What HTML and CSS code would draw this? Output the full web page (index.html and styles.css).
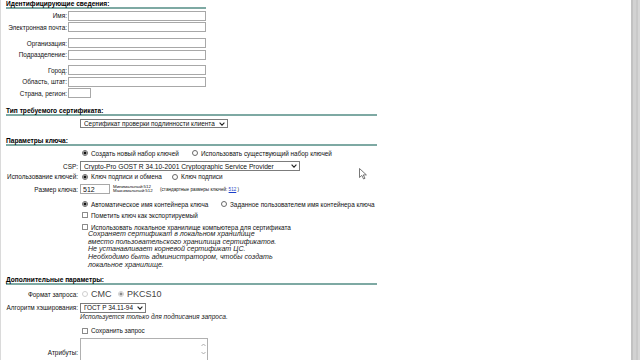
FILE: index.html
```html
<!DOCTYPE html>
<html lang="ru">
<head>
<meta charset="utf-8">
<title>Запрос сертификата</title>
<link rel="stylesheet" href="styles.css">
</head>
<body>
<div class="page">
  <section class="sec sec-id">
    <h2 class="title title-short">Идентифицирующие сведения:</h2>
    <div class="row first"><span class="lbl">Имя:</span><input class="text" type="text"></div>
    <div class="row"><span class="lbl">Электронная почта:</span><input class="text" type="text"></div>
    <div class="row sep"><span class="lbl">Организация:</span><input class="text" type="text"></div>
    <div class="row"><span class="lbl">Подразделение:</span><input class="text" type="text"></div>
    <div class="row sep2"><span class="lbl">Город:</span><input class="text" type="text"></div>
    <div class="row"><span class="lbl">Область, штат:</span><input class="text" type="text"></div>
    <div class="row"><span class="lbl">Страна, регион:</span><input class="text short" type="text"></div>
  </section>

  <section class="sec sec-type">
    <h2 class="title title-long">Тип требуемого сертификата:</h2>
    <div class="row r-cert"><span class="lbl"></span>
      <div class="select sel-cert"><span class="sel-text">Сертификат проверки подлинности клиента</span>
        <svg class="chev" width="6" height="4" viewBox="0 0 6 4"><path d="M0.6 0.6 L3 3.2 L5.4 0.6" fill="none" stroke="#222" stroke-width="1.1"/></svg>
      </div>
    </div>
  </section>

  <section class="sec sec-key">
    <h2 class="title title-long">Параметры ключа:</h2>
    <div class="row r-keyset"><span class="lbl"></span>
      <label class="opt w110"><input type="radio" name="ks" checked>Создать новый набор ключей</label>
      <label class="opt"><input type="radio" name="ks">Использовать существующий набор ключей</label>
    </div>
    <div class="row r-csp"><span class="lbl">CSP:</span>
      <div class="select sel-csp"><span class="sel-text latin">Crypto-Pro GOST R 34.10-2001 Cryptographic Service Provider</span>
        <svg class="chev" width="6" height="4" viewBox="0 0 6 4"><path d="M0.6 0.6 L3 3.2 L5.4 0.6" fill="none" stroke="#222" stroke-width="1.1"/></svg>
      </div>
    </div>
    <div class="row r-usage"><span class="lbl">Использование ключей:</span>
      <label class="opt w90"><input type="radio" name="ku" checked>Ключ подписи и обмена</label>
      <label class="opt"><input type="radio" name="ku">Ключ подписи</label>
    </div>
    <div class="row r-size"><span class="lbl">Размер ключа:</span>
      <input class="text size" type="text" value="512">
      <span class="minmax"><span>Минимальный:512</span><span>Максимальный:512</span></span>
      <span class="std">(стандартные размеры ключей: <a class="lnk">512</a> )</span>
    </div>
    <div class="row r-cont"><span class="lbl"></span>
      <label class="opt w139"><input type="radio" name="kc" checked>Автоматическое имя контейнера ключа</label>
      <label class="opt"><input type="radio" name="kc">Заданное пользователем имя контейнера ключа</label>
    </div>
    <div class="row r-exp"><span class="lbl"></span>
      <label class="opt"><input type="checkbox">Пометить ключ как экспортируемый</label>
    </div>
    <div class="row r-local"><span class="lbl"></span>
      <label class="opt"><input type="checkbox">Использовать локальное хранилище компьютера для сертификата</label>
    </div>
    <div class="note">
      <div>Сохраняет сертификат в локальном хранилище</div>
      <div>вместо пользовательского хранилища сертификатов.</div>
      <div>Не устанавливает корневой сертификат ЦС.</div>
      <div>Необходимо быть администратором, чтобы создать</div>
      <div>локальное хранилище.</div>
    </div>
  </section>

  <section class="sec sec-extra">
    <h2 class="title title-long">Дополнительные параметры:</h2>
    <div class="row r-format"><span class="lbl">Формат запроса:</span>
      <label class="opt big w36"><input type="radio" name="fmt" class="dis" disabled>CMC</label>
      <label class="opt big"><input type="radio" name="fmt" class="dis" checked>PKCS10</label>
    </div>
    <div class="row r-hash"><span class="lbl">Алгоритм хэширования:</span>
      <div class="select sel-hash"><span class="sel-text">ГОСТ Р 34.11-94</span>
        <svg class="chev" width="6" height="4" viewBox="0 0 6 4"><path d="M0.6 0.6 L3 3.2 L5.4 0.6" fill="none" stroke="#222" stroke-width="1.1"/></svg>
      </div>
    </div>
    <div class="hashnote">Используется только для подписания запроса.</div>
    <div class="row r-save"><span class="lbl"></span>
      <label class="opt"><input type="checkbox">Сохранить запрос</label>
    </div>
    <div class="row r-attr"><span class="lbl attr-lbl">Атрибуты:</span>
      <div class="textarea">
        <div class="ta-scroll">
          <svg width="5" height="4" viewBox="0 0 5 4"><path d="M0.5 3 L2.5 1 L4.5 3" fill="none" stroke="#999" stroke-width="0.8"/></svg>
          <svg width="5" height="4" viewBox="0 0 5 4"><path d="M0.5 1 L2.5 3 L4.5 1" fill="none" stroke="#999" stroke-width="0.8"/></svg>
        </div>
      </div>
    </div>
  </section>

  <svg class="cursor" width="9" height="12" viewBox="0 0 9 12"><path d="M0.5 0.5 L0.5 9.5 L2.8 7.4 L4.6 11 L6 10.3 L4.3 6.9 L7.4 6.9 Z" fill="#fff" stroke="#555" stroke-width="0.8"/></svg>
</div>
<div class="scrollbar"></div>
</body>
</html>
```

FILE: styles.css
```css
* { box-sizing: border-box; }
html, body { margin: 0; padding: 0; }
body {
  width: 640px;
  height: 360px;
  overflow: hidden;
  background: #fff;
  display: flex;
  font-family: "Liberation Sans", Arial, sans-serif;
  font-size: 6.4px;
  color: #111;
}
.page {
  flex: 1;
  border-left: 1px solid #dadada;
  padding-left: 5px;
  position: relative;
}
.scrollbar {
  width: 9px;
  height: 360px;
  flex: none;
  background: linear-gradient(to right, #c2c2c2 0, #c2c2c2 2px, #d2d2d2 2px, #d2d2d2 5px, #c9c9c9 5px, #c9c9c9 7px, #d6d6d6 7px);
}
.title {
  margin: 0;
  font-size: 6.6px;
  font-weight: bold;
  line-height: 7px;
  border-bottom: 2px solid #7ea9a3;
  color: #000;
  white-space: nowrap;
}
.title-short { width: 200px; }
.title-long { width: 371px; }

.row {
  display: flex;
  align-items: center;
  height: 10px;
  white-space: nowrap;
}
.lbl {
  width: 72px;
  margin-right: 2px;
  text-align: right;
  flex: none;
}
.sec-id .row { height: 11.5px; }
.sec-id .lbl { width: 61px; margin-right: 1px; }
.sec-id .first { margin-top: 1px; }
.sec-id .sep { margin-top: 4.5px; }
.sec-id .sep2 { margin-top: 4px; }

.text {
  width: 138px;
  height: 10px;
  border: 1px solid #a8a8a8;
  margin: 0;
  padding: 0 2px;
  background: #fff;
  font-family: inherit;
  font-size: 7px;
  color: #111;
  flex: none;
}
.text.short { width: 23px; }
.text.size { width: 30px; }

.select {
  display: flex;
  align-items: center;
  justify-content: space-between;
  height: 9.5px;
  border: 1px solid #7c7c7c;
  padding: 0 2px 0 3px;
  background: #fff;
  flex: none;
}
.sel-text { overflow: hidden; }
.sel-text.latin { font-size: 6.7px; }
.sel-cert { width: 148px; }
.sel-csp { width: 220px; }
.sel-hash { width: 66px; }
.chev { flex: none; }

.sec-type { margin-top: 8px; }
.r-cert { margin-top: 2.5px; }

.sec-key { margin-top: 8.5px; }
.r-keyset { margin-top: 2px; }
.r-csp { margin-top: 3px; }
.r-usage { margin-top: 0.5px; }
.r-size { margin-top: 2.5px; }
.r-cont { margin-top: 5px; }
.r-exp { margin-top: 1px; }
.r-local { margin-top: 3px; height: 8px; }

.opt {
  display: inline-flex;
  align-items: center;
  flex: none;
}
.opt input {
  -webkit-appearance: none;
  appearance: none;
  width: 6px;
  height: 6px;
  margin: 0 3px 0 2px;
  border: 1px solid #6a6a6a;
  background: #fff;
  flex: none;
}
.opt input[type="radio"] { border-radius: 50%; }
.opt input[type="radio"]:checked {
  background: radial-gradient(circle, #111 0, #111 1.3px, #fff 1.8px);
}
.opt input[type="checkbox"] { border-color: #8a8a8a; border-radius: 0.5px; }
.opt input.dis { border-color: #cfcfcf; }
.opt input.dis:checked {
  background: radial-gradient(circle, #8a8a8a 0, #8a8a8a 1.3px, #fff 1.8px);
}
.w110 { width: 110px; }
.w90 { width: 90px; }
.w139 { width: 139px; }
.w36 { width: 36px; }
.opt.big { font-size: 9px; color: #444; }

.minmax {
  display: flex;
  flex-direction: column;
  font-size: 4.4px;
  line-height: 4.5px;
  margin-left: 3px;
  width: 47px;
}
.std { font-size: 4.6px; }
.lnk { color: #1a3fc9; text-decoration: underline; }

.note {
  padding-left: 82px;
  font-style: italic;
  font-size: 7.1px;
  line-height: 7.65px;
  white-space: nowrap;
  color: #222;
}

.sec-extra { margin-top: 7px; }
.r-format { margin-top: 4px; }
.r-hash { margin-top: 3.5px; }
.hashnote {
  padding-left: 74px;
  font-style: italic;
  font-size: 6.6px;
  line-height: 8px;
  white-space: nowrap;
  color: #222;
}
.r-save { margin-top: 5px; }
.r-attr { margin-top: 2px; align-items: flex-start; height: 40px; }
.attr-lbl { margin-top: 11px; }
.textarea {
  width: 128px;
  height: 40px;
  border: 1px solid #b0b0b0;
  display: flex;
  justify-content: flex-end;
  flex: none;
}
.ta-scroll {
  width: 7px;
  display: flex;
  flex-direction: column;
  align-items: center;
  padding-top: 4px;
  gap: 4px;
}
.ta-scroll svg { display: block; }

.cursor {
  position: absolute;
  left: 358px;
  top: 168px;
}
```
